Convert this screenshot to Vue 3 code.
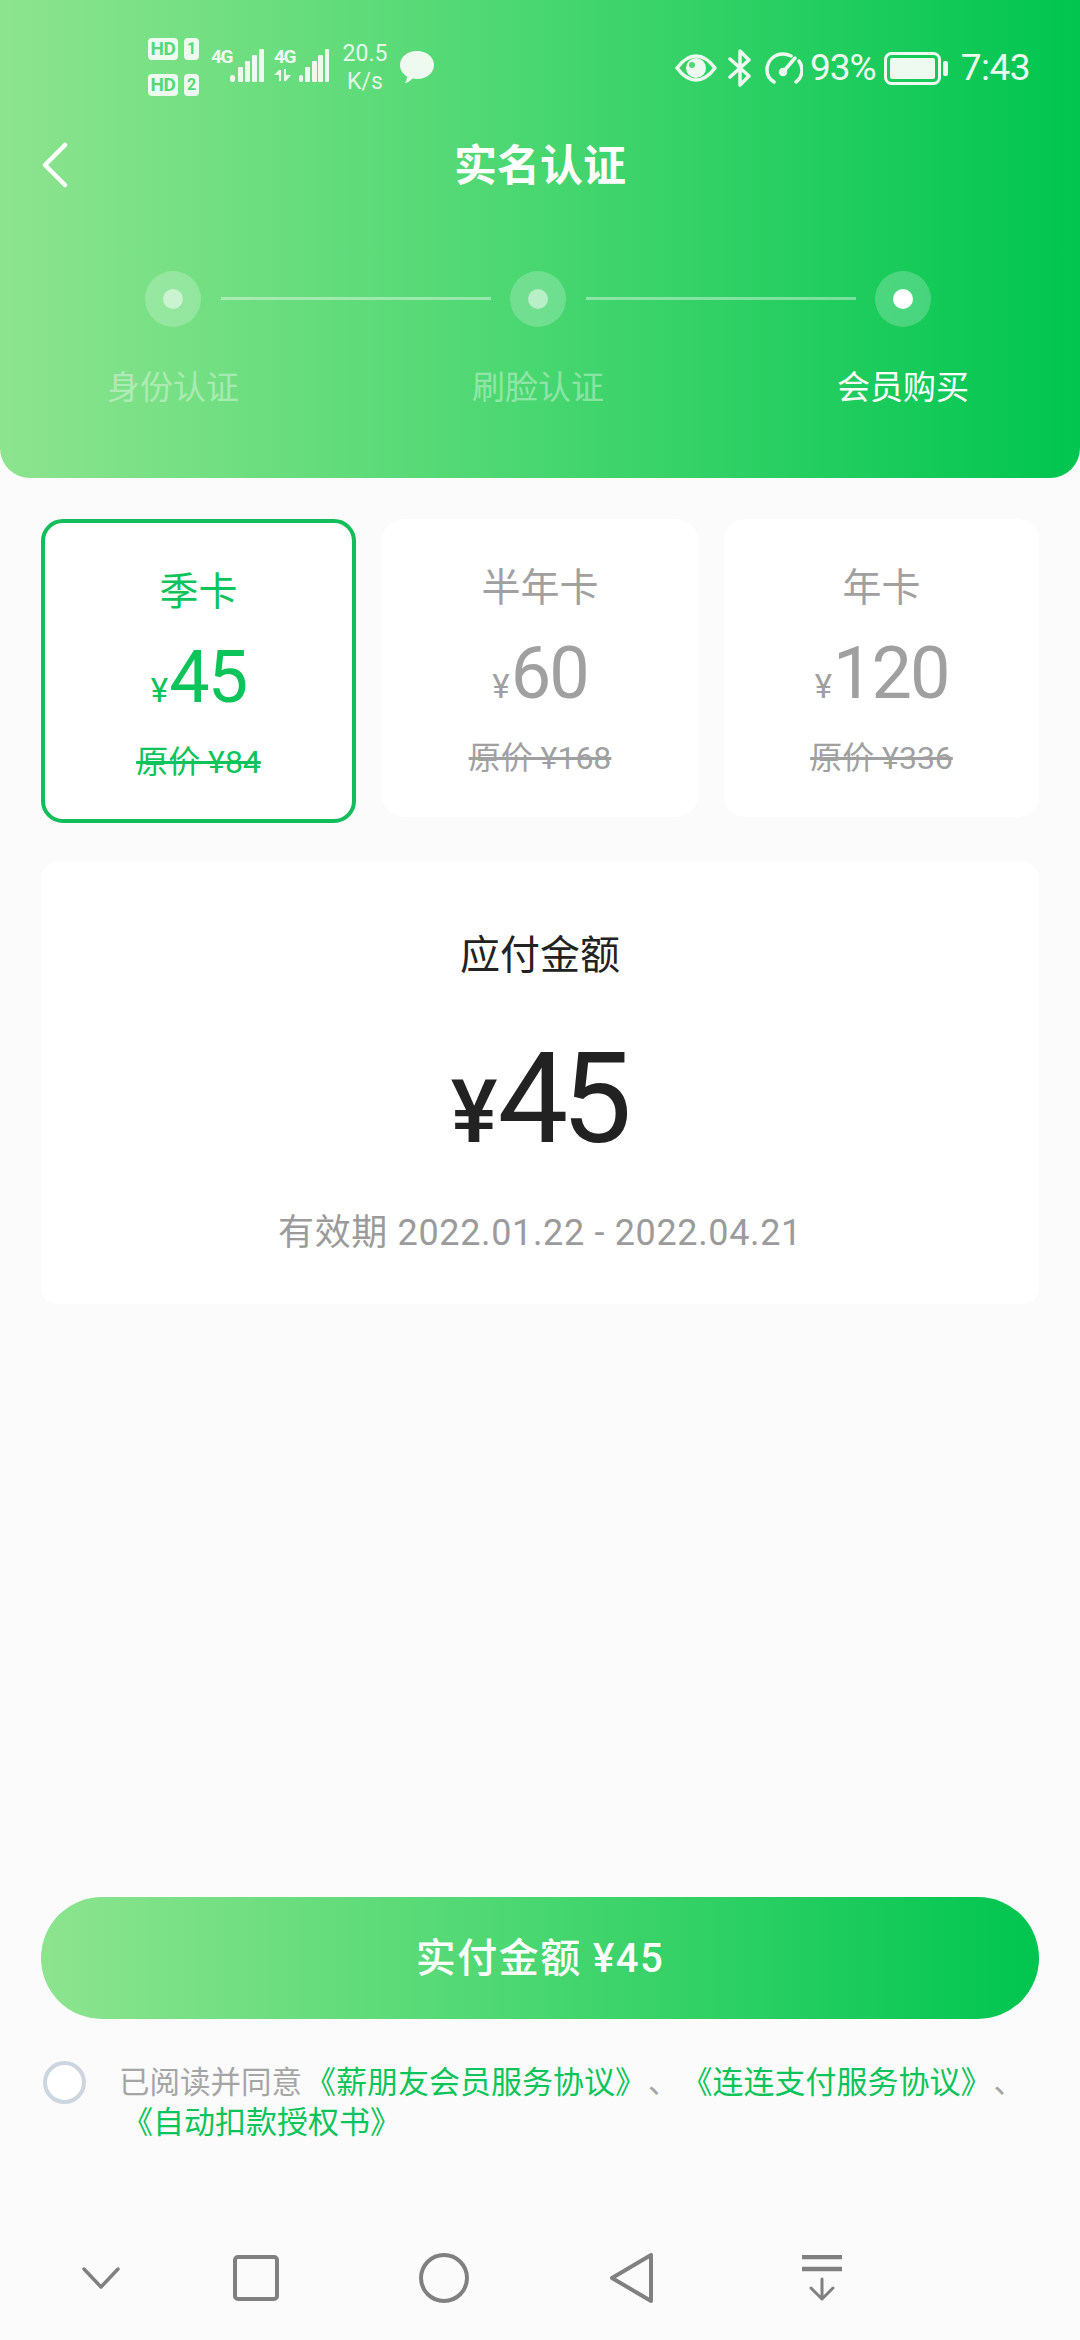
<script setup>
const steps = [
  { label: '身份认证', active: false },
  { label: '刷脸认证', active: false },
  { label: '会员购买', active: true },
]
const plans = [
  { name: '季卡', price: '45', old: '原价 ¥84', active: true },
  { name: '半年卡', price: '60', old: '原价 ¥168', active: false },
  { name: '年卡', price: '120', old: '原价 ¥336', active: false },
]
</script>

<template>
  <div class="page">
    <header class="hero">
      <div class="status">
        <div class="status-left">
          <div class="sims">
            <div class="sim"><span class="hd">HD</span><span class="slot">1</span></div>
            <div class="sim"><span class="hd">HD</span><span class="slot">2</span></div>
          </div>
          <div class="net">
            <span class="g4">4G</span>
            <svg class="bars" width="34" height="34" viewBox="0 0 34 34" fill="#eefaf0">
              <rect x="0" y="26" width="5" height="7" rx="2.500" /><rect x="8" y="18" width="5" height="15" rx="1" /><rect x="15" y="12" width="5" height="21" rx="1" /><rect x="22" y="6" width="5" height="27" rx="1" /><rect x="29" y="0" width="5" height="33" rx="1" />
            </svg>
          </div>
          <div class="net net2">
            <div class="g4wrap">
              <span class="g4">4G</span>
              <svg width="21" height="12" viewBox="0 0 21 12" fill="#eefaf0"><path d="M0 6 5 1h2v11H5V6ZM10 0h2v6l5 0-5 6h-2Z" /></svg>
            </div>
            <svg class="bars" width="30" height="34" viewBox="0 0 30 34" fill="#eefaf0">
              <rect x="0" y="26" width="4" height="7" rx="2" /><rect x="6" y="18" width="5" height="15" rx="1" /><rect x="13" y="12" width="5" height="21" rx="1" /><rect x="19" y="6" width="5" height="27" rx="1" /><rect x="26" y="0" width="4" height="33" rx="1" />
            </svg>
          </div>
          <div class="speed"><span>20.5</span><span>K/s</span></div>
          <svg class="bubble" width="34" height="34" viewBox="0 0 34 34" fill="#eefaf0"><path d="M17 1c9.500 0 17 6 17 14s-7.500 14-17 14c-1.500 0-3-.2-4.500-.5C10 31 7 33 5 33c1-1.500 2-4 2-6.500C3 24 0 20 0 15 0 7 7.500 1 17 1Z" /></svg>
        </div>
        <div class="status-right">
          <svg width="42" height="28" viewBox="0 0 42 28">
            <path d="M2 14C8 6 14 2 21 2s13 4 19 12c-6 8-12 12-19 12S8 22 2 14Z" fill="none" stroke="#eefaf0" stroke-width="3.500" stroke-linejoin="round" />
            <circle cx="21" cy="14" r="10" fill="#eefaf0" />
            <circle cx="17" cy="11" r="3" fill="#4fd873" />
          </svg>
          <svg class="bt" width="24" height="38" viewBox="0 0 24 38" fill="none" stroke="#eefaf0" stroke-width="3.500" stroke-linejoin="round" stroke-linecap="round">
            <path d="M2 10 21 27 12 36V2l9 9L2 28" />
          </svg>
          <svg class="gauge" width="38" height="32" viewBox="0 0 38 32" fill="none" stroke="#eefaf0" stroke-width="3.500" stroke-linecap="round">
            <path d="M9 30C4 27 2 22 2 18 2 9 9 2 18 2c3 0 6 1 8 2" />
            <path d="M34 9c2 3 3 6 3 9 0 5-2 9-6 12" />
            <path d="M19 19 30 6" />
            <circle cx="18" cy="20" r="2.500" fill="#eefaf0" />
          </svg>
          <span class="stat-text pct">93%</span>
          <svg class="batt" width="64" height="33" viewBox="0 0 64 33">
            <rect x="1.500" y="1.500" width="54" height="30" rx="6" fill="none" stroke="#eefaf0" stroke-width="3" />
            <rect x="6" y="6" width="45" height="21" rx="2" fill="#eefaf0" />
            <rect x="59" y="9" width="5" height="15" rx="2" fill="#eefaf0" />
          </svg>
          <span class="stat-text time">7:43</span>
        </div>
      </div>

      <div class="topbar">
        <svg class="back" width="28" height="46" viewBox="0 0 28 46" fill="none" stroke="#fff" stroke-width="4.500" stroke-linecap="round" stroke-linejoin="round">
          <path d="M24 3 4 23l20 20" />
        </svg>
        <h1 class="title">实名认证</h1>
      </div>

      <div class="steps">
        <template v-for="(s, i) in steps" :key="s.label">
          <div class="step" :class="{ on: s.active }">
            <div class="dot"><i></i></div>
            <div class="step-label">{{ s.label }}</div>
          </div>
          <div v-if="i < 2" class="line"></div>
        </template>
      </div>
    </header>

    <section class="plans">
      <div v-for="p in plans" :key="p.name" class="plan" :class="{ on: p.active }">
        <div class="plan-name">{{ p.name }}</div>
        <div class="plan-price"><span class="yen">¥</span><span class="amount">{{ p.price }}</span></div>
        <div class="plan-old">{{ p.old }}</div>
      </div>
    </section>

    <section class="summary">
      <div class="sum-title">应付金额</div>
      <div class="sum-price"><span class="sum-yen">¥</span><span class="sum-amount">45</span></div>
      <div class="sum-date">有效期 2022.01.22 - 2022.04.21</div>
    </section>

    <div class="spacer"></div>

    <div class="pay">实付金额 ¥45</div>

    <div class="agree">
      <div class="check"></div>
      <p class="agree-text">已阅读并同意<a>《薪朋友会员服务协议》</a>、<a>《连连支付服务协议》</a>、<a>《自动扣款授权书》</a></p>
    </div>

    <nav class="nav">
      <svg width="38" height="22" viewBox="0 0 38 22" fill="none" stroke="#808080" stroke-width="3.500" stroke-linecap="round" stroke-linejoin="round"><path d="M2 2l17 18L36 2" /></svg>
      <svg width="46" height="46" viewBox="0 0 46 46" fill="none" stroke="#808080" stroke-width="4"><rect x="2" y="2" width="42" height="42" rx="3" /></svg>
      <svg width="50" height="50" viewBox="0 0 50 50" fill="none" stroke="#808080" stroke-width="4"><circle cx="25" cy="25" r="23" /></svg>
      <svg width="44" height="50" viewBox="0 0 44 50" fill="none" stroke="#808080" stroke-width="4" stroke-linejoin="round"><path d="M41 2v46L2 25Z" /></svg>
      <svg width="42" height="46" viewBox="0 0 42 46" fill="none" stroke="#808080" stroke-width="4" stroke-linecap="round" stroke-linejoin="round"><path d="M1 2h40M1 14h40" stroke-width="4.500" stroke-linecap="butt" /><path d="M21 24v20M10 33l11 11 11-11" stroke-width="3" /></svg>
    </nav>
  </div>
</template>

<style>
html, body { margin: 0; padding: 0; background: #fbfbfb; }
</style>

<style scoped>
* { box-sizing: border-box; }
.page {
  width: 1080px;
  height: 2340px;
  display: flex;
  flex-direction: column;
  background: #fbfbfb;
  font-family: Roboto, "Noto Sans CJK SC", sans-serif;
  overflow: hidden;
}
.hero {
  height: 478px;
  flex: none;
  background: linear-gradient(90deg, #8de48e 0%, #4fd873 45%, #00c54f 100%);
  border-radius: 0 0 30px 30px;
  color: #fff;
}
.status {
  height: 120px;
  padding: 36px 50px 0 148px;
  display: flex;
  justify-content: space-between;
  align-items: flex-start;
}
.status-left, .status-right { display: flex; }
.status-left { align-items: flex-start; }
.status-right { align-items: center; height: 50px; margin-top: 7px; color: #eefaf0; }
.sims { display: flex; flex-direction: column; gap: 14px; margin-top: 2px; }
.sim { display: flex; gap: 6px; height: 22px; }
.hd, .slot {
  background: #eefaf0;
  color: #55d978;
  font-weight: 700;
  line-height: 22px;
  height: 22px;
  border-radius: 4px;
  text-align: center;
}
.hd { width: 30px; font-size: 19px; letter-spacing: -0.5px; }
.slot { width: 15px; font-size: 16px; }
.net { display: flex; align-items: flex-start; margin-left: 12px; margin-top: 13px; }
.net2 { margin-left: 10px; }
.g4 { font-size: 19px; line-height: 16px; font-weight: 700; color: #eefaf0; display: block; width: 19px; letter-spacing: -1.5px; }
.g4wrap { display: flex; flex-direction: column; gap: 4px; width: 25px; }
.speed {
  display: flex;
  flex-direction: column;
  align-items: center;
  width: 44px;
  margin-left: 14px;
  margin-top: 4px;
  font-size: 23px;
  line-height: 28px;
  color: #e3f8e7;
}
.bubble { margin-left: 13px; margin-top: 14px; }
.stat-text { font-size: 37px; line-height: 50px; }
.bt { margin-left: 11px; }
.gauge { margin-left: 13px; }
.pct { margin-left: 7px; letter-spacing: -1px; }
.batt { margin-left: 8px; }
.time { margin-left: 13px; letter-spacing: -0.5px; }
.topbar {
  height: 92px;
  display: flex;
  align-items: center;
  justify-content: center;
  position: relative;
}
.back { position: absolute; left: 41px; top: 22px; }
.title { margin: 0; font-size: 43px; line-height: 92px; font-weight: 700; color: #fff; }
.steps {
  display: flex;
  align-items: flex-start;
  padding: 59px 0 0 109px;
}
.step {
  width: 128px;
  flex: none;
  display: flex;
  flex-direction: column;
  align-items: center;
}
.dot {
  width: 56px;
  height: 56px;
  border-radius: 50%;
  background: rgba(255, 255, 255, 0.22);
  display: flex;
  align-items: center;
  justify-content: center;
}
.dot i {
  width: 20px;
  height: 20px;
  border-radius: 50%;
  background: rgba(255, 255, 255, 0.5);
}
.step.on .dot i { background: #fff; }
.step-label {
  margin-top: 37px;
  font-size: 33px;
  line-height: 48px;
  color: rgba(255, 255, 255, 0.4);
  white-space: nowrap;
}
.step.on .step-label { color: #fff; }
.line {
  width: 270px;
  height: 3px;
  flex: none;
  margin: 26px -17px 0 -16px;
  background: rgba(255, 255, 255, 0.4);
}
.plans {
  display: grid;
  grid-template-columns: 315px 316px 315px;
  align-items: start;
  column-gap: 26px;
  padding: 41px 41px 0;
}
.plan {
  height: 298px;
  background: #fff;
  border-radius: 22px;
  display: flex;
  flex-direction: column;
  align-items: center;
  color: #a0a0a0;
  padding-top: 42px;
}
.plan.on {
  height: 304px;
  border: 4px solid #14bd5b;
  color: #0cc45a;
}
.plan-name { font-size: 39px; line-height: 54px; }
.plan-price { display: flex; align-items: baseline; height: 90px; margin-top: 14px; line-height: 90px; }
.yen { font-size: 33px; margin-right: 1px; }
.amount { font-size: 72px; letter-spacing: -2px; }
.plan-old { font-size: 32px; line-height: 40px; margin-top: 19px; text-decoration: line-through; }
.summary {
  margin: 39px 41px 0;
  height: 442px;
  flex: none;
  background: #fff;
  border-radius: 16px;
  display: flex;
  flex-direction: column;
  align-items: center;
  padding-top: 66px;
}
.sum-title { font-size: 40px; line-height: 56px; color: #222; }
.sum-price { display: flex; align-items: baseline; height: 140px; line-height: 140px; margin-top: 45px; margin-left: -4px; color: #222; }
.sum-yen { font-size: 88px; font-weight: 500; margin-right: 0; }
.sum-amount { font-size: 126px; letter-spacing: -7px; }
.sum-date { font-size: 36px; line-height: 50px; color: #9b9b9b; margin-top: 39px; letter-spacing: 0.65px; }
.spacer { flex: 1; }
.pay {
  margin: 0 41px;
  height: 122px;
  flex: none;
  border-radius: 61px;
  background: linear-gradient(90deg, #8de48e 0%, #4fd873 45%, #00c54f 100%);
  color: #fff;
  font-size: 40px;
  font-weight: 500;
  letter-spacing: 1.5px;
  line-height: 124px;
  text-align: center;
}
.agree {
  display: flex;
  align-items: flex-start;
  padding: 42px 40px 0 43px;
  height: 209px;
  flex: none;
}
.check {
  width: 43px;
  height: 43px;
  border-radius: 50%;
  border: 4px solid #cdd6de;
  background: #fff;
  flex: none;
}
.agree-text {
  margin: 2px 0 0 33px;
  font-size: 30.500px;
  line-height: 40px;
  color: #a5a5a5;
  text-spacing-trim: space-all;
}
.agree-text a { color: #0cc45a; white-space: nowrap; font-size: 31px; padding: 0 2px 0 3px; }
.nav {
  height: 112px;
  flex: none;
  display: grid;
  grid-template-columns: 154px 156px 220px 156px 224px;
  padding-left: 24px;
  justify-items: center;
  align-items: center;
  padding-bottom: 12px;
}
</style>
